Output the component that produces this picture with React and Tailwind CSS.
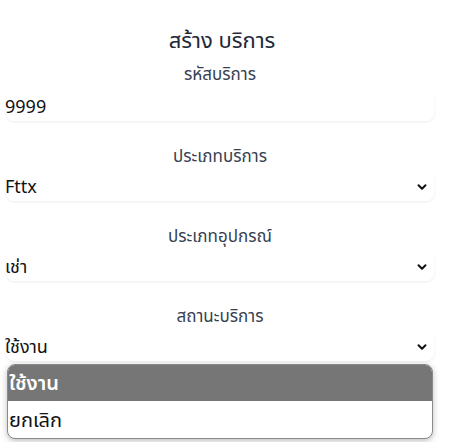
import React from "react";

const Chevron = () => (
  <svg width="12" height="12" viewBox="0 0 12 12" className="shrink-0">
    <path d="M2.5 4.2 L6 7.7 L9.5 4.2" fill="none" stroke="#111" strokeWidth="2" strokeLinecap="round" strokeLinejoin="round" />
  </svg>
);

const Label = ({ children }) => (
  <div className="text-center text-[17px] leading-[22px] text-[#374151]">{children}</div>
);

const Box = ({ children, arrow }) => (
  <div className="h-[29px] flex items-center justify-between rounded-lg bg-white shadow-[0_1px_3px_rgba(0,0,0,0.08)] pr-[6px]">
    <span className="text-[18px] text-[#111] -ml-[1px]">{children}</span>
    {arrow && <Chevron />}
  </div>
);

export default function App() {
  const fields = [
    { label: "ประเภทบริการ", value: "Fttx" },
    { label: "ประเภทอุปกรณ์", value: "เช่า" },
    { label: "สถานะบริการ", value: "ใช้งาน" },
  ];

  return (
    <div className="relative w-[451px] h-[442px] bg-white overflow-hidden" style={{ fontFamily: '"Noto Sans", "Noto Sans Thai", Tahoma, sans-serif' }}>
      <div className="pl-[6px] pr-[17px] pt-[25px]">
        <h1 className="text-center text-[22px] leading-[28px] text-[#1f2937] ml-[4px]">สร้าง บริการ</h1>
        <div className="mt-[10px]">
          <Label>รหัสบริการ</Label>
          <div className="mt-[7px]">
            <Box>9999</Box>
          </div>
        </div>
        {fields.map((f) => (
          <div key={f.label} className="mt-[24px]">
            <Label>{f.label}</Label>
            <div className="mt-[5px]">
              <Box arrow>{f.value}</Box>
            </div>
          </div>
        ))}
      </div>

      <div className="absolute left-[7px] top-[364px] w-[426px] rounded-lg overflow-hidden border border-[#8a8a8a] bg-white shadow-[0_2px_6px_rgba(0,0,0,0.25)]">
        <div className="h-[36px] flex items-center bg-[#767676] text-white text-[20px] font-semibold pl-[1px]">ใช้งาน</div>
        <div className="h-[37px] flex items-center text-[#111] text-[20px] pl-[1px]">ยกเลิก</div>
      </div>
    </div>
  );
}
